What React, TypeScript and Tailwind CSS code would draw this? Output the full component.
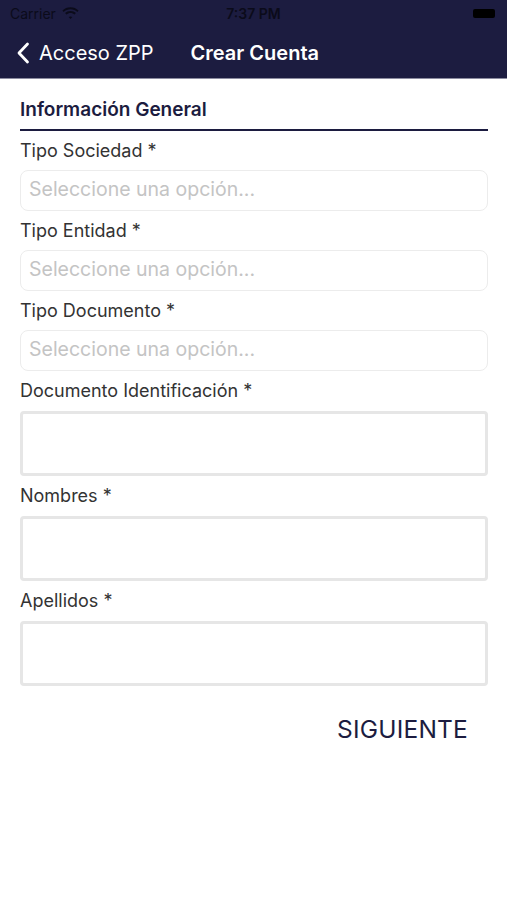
import React from 'react';

const selects = ['Tipo Sociedad *', 'Tipo Entidad *', 'Tipo Documento *'];
const inputs = ['Documento Identificación *', 'Nombres *', 'Apellidos *'];

const App: React.FC = () => {
  return (
    <div className="min-h-[900px] w-[507px] bg-white font-['Inter',sans-serif]">
      {/* Status bar + nav */}
      <div className="bg-[#1c1c40] border-b border-[#8c8ca0]">
        <div className="flex h-[27px] items-center justify-between px-[10px] text-[14px] text-[#0b0b1a]">
          <div className="flex w-[120px] items-center gap-[6px]">
            <span>Carrier</span>
            <svg width="17" height="13" viewBox="0 0 17 13" fill="#0b0b1a">
              <path d="M8.5 2.2c2.6 0 5 1 6.8 2.7l1.3-1.4C14.4 1.4 11.6.2 8.5.2S2.6 1.4.4 3.5l1.3 1.4C3.5 3.2 5.9 2.2 8.5 2.2z" />
              <path d="M8.5 5.9c1.6 0 3 .6 4.1 1.6l1.3-1.4C12.5 4.8 10.6 4 8.5 4S4.5 4.8 3.1 6.1l1.3 1.4c1.1-1 2.5-1.6 4.1-1.6z" />
              <path d="M8.5 9.4c.7 0 1.3.3 1.8.7L8.5 12 6.7 10.1c.5-.4 1.1-.7 1.8-.7z" />
            </svg>
          </div>
          <span className="font-semibold">7:37 PM</span>
          <div className="flex w-[120px] justify-end pr-[2px]">
            <div className="h-[9px] w-[22px] rounded-[2px] bg-black" />
          </div>
        </div>
        <div className="flex h-[51px] items-center text-white">
          <div className="flex items-center pl-[16px]">
            <svg width="14" height="22" viewBox="0 0 14 22" fill="none" stroke="white" strokeWidth="2.8" strokeLinecap="round" strokeLinejoin="round">
              <path d="M11.5 2 L3 11 L11.5 20" />
            </svg>
            <span className="ml-[9px] text-[20px]">Acceso ZPP</span>
          </div>
          <span className="ml-[37px] text-[20px] font-semibold">Crear Cuenta</span>
        </div>
      </div>

      <div className="pl-[20px] pr-[19px] pt-[17px]">
        <h2 className="border-b-2 border-[#1c1c40] pb-[4px] text-[19px] font-semibold text-[#1c1c40]">
          Información General
        </h2>

        {selects.map((label) => (
          <div key={label}>
            <div className="mb-[7px] mt-[8px] h-[24px] text-[18px] leading-[24px] text-[#333333]">{label}</div>
            <div className="flex h-[41px] items-center rounded-[8px] border border-[#ececec] px-[8px] text-[19.5px] text-[#c4c4c4]">
              Seleccione una opción...
            </div>
          </div>
        ))}

        {inputs.map((label) => (
          <div key={label}>
            <div className="mb-[8px] mt-[8px] h-[24px] text-[18px] leading-[24px] text-[#333333]">{label}</div>
            <div className="h-[65px] rounded-[4px] border-[3px] border-[#e6e6e6] bg-white" />
          </div>
        ))}

        <div className="mt-[25px] flex justify-end pr-[20px]">
          <button className="text-[24.5px] tracking-[0.2px] text-[#1c1c40]">SIGUIENTE</button>
        </div>
      </div>
    </div>
  );
};

export default App;
